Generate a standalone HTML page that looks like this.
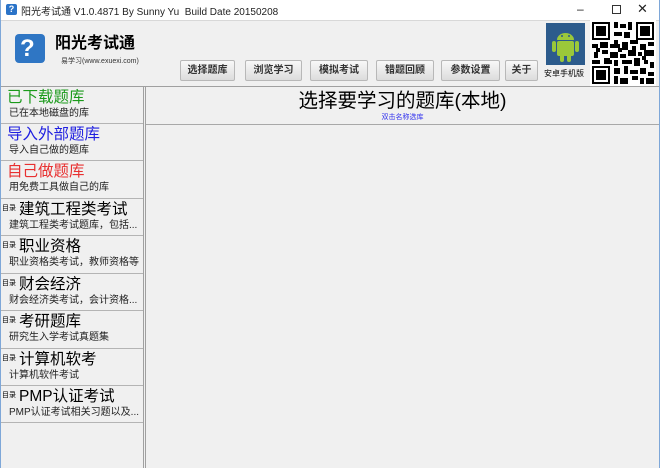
<!DOCTYPE html>
<html><head><meta charset="utf-8"><style>
*{margin:0;padding:0;box-sizing:border-box}
body{width:660px;height:468px;overflow:hidden;background:#f0f0f0;font-family:"Liberation Sans","Noto Sans CJK SC",sans-serif;position:relative;color:#000}
.abs{position:absolute}
.title{left:0;top:0;width:660px;height:20px;background:#fff;border-left:1px solid #7ea7d8;border-right:1px solid #7ea7d8}
.title span{position:absolute;left:20px;top:3px;font-size:10px;color:#222;white-space:nowrap}
.btn{position:absolute;top:60px;height:21px;border:1px solid #b8b8b8;border-radius:2px;background:linear-gradient(#f8f8f8,#dcdcdc);font-size:10px;font-weight:bold;color:#333;text-align:center;line-height:19px}
.item{position:absolute;left:1px;width:142px;border-bottom:1px solid #b4b4b4}
.item .h{position:absolute;left:6px;top:2px;font-size:15.5px;white-space:nowrap;line-height:18px}
.item .s{position:absolute;left:8px;top:21px;font-size:10px;white-space:nowrap;color:#222;line-height:12px}
.item .m{position:absolute;left:1px;top:4px;font-size:7px;font-family:"Noto Sans CJK SC",sans-serif}
.item .h2{left:18px}
</style></head><body>
<div class="abs" style="left:0;top:0;width:1px;height:468px;background:#7ea7d8"></div>
<div class="abs" style="right:0;top:0;width:1px;height:468px;background:#7ea7d8"></div>
<div class="abs title"><div class="abs" style="left:5px;top:4px;width:11px;height:11px;background:#2a73c8;border-radius:2px;color:#fff;font-size:9px;line-height:11px;text-align:center;font-weight:bold">?</div><span>阳光考试通 V1.0.4871 By Sunny Yu&nbsp; Build Date 20150208</span>
<span style="left:576px;top:2px;font-size:12px">–</span>
<div class="abs" style="left:611px;top:5px;width:9px;height:9px;border:1px solid #333"></div>
<span style="left:636px;top:1px;font-size:13px">✕</span></div>
<div class="abs" style="left:1px;top:20px;width:658px;height:1px;background:#d8d8d8"></div>
<div class="abs" style="left:15px;top:34px;width:30px;height:29px;background:#2f76c4;border-radius:4px;color:#fff;font-size:24px;font-weight:bold;line-height:29px;text-align:left;padding-left:5px">?</div>
<div class="abs" style="left:55px;top:34px;font-size:16px;font-weight:bold;white-space:nowrap;line-height:20px">阳光考试通</div>
<div class="abs" style="left:61px;top:56px;font-size:7px;white-space:nowrap;color:#333">易学习(www.exuexi.com)</div>
<div class="btn" style="left:180px;width:55px">选择题库</div>
<div class="btn" style="left:245px;width:57px">浏览学习</div>
<div class="btn" style="left:310px;width:58px">模拟考试</div>
<div class="btn" style="left:376px;width:58px">错题回顾</div>
<div class="btn" style="left:441px;width:59px">参数设置</div>
<div class="btn" style="left:505px;width:33px">关于</div>
<svg class="abs" style="left:546px;top:23px" width="39" height="42" viewBox="0 0 39 42"><rect width="39" height="42" fill="#2c5b8c"/><g fill="#9bc83a"><path d="M11 17a8.5 7 0 0 1 17 0z"/><rect x="11" y="18" width="17" height="15" rx="2"/><rect x="6" y="18" width="4" height="11" rx="2"/><rect x="29" y="18" width="4" height="11" rx="2"/><rect x="14" y="31" width="4" height="8" rx="2"/><rect x="21" y="31" width="4" height="8" rx="2"/></g><circle cx="16" cy="13" r="1" fill="#2c5b8c"/><circle cx="23" cy="13" r="1" fill="#2c5b8c"/></svg>
<div class="abs" style="left:544px;top:68px;font-size:8px;white-space:nowrap">安卓手机版</div>
<svg class="abs" style="left:590px;top:20px" width="66" height="66" viewBox="0 0 33 33"><rect width="33" height="33" fill="#fff"/><g fill="#000">
<rect x="1" y="1" width="9" height="9"/><rect x="23" y="1" width="9" height="9"/><rect x="1" y="23" width="9" height="9"/></g>
<g fill="#fff"><rect x="2" y="2" width="7" height="7"/><rect x="24" y="2" width="7" height="7"/><rect x="2" y="24" width="7" height="7"/></g>
<g fill="#000"><rect x="3" y="3" width="5" height="5"/><rect x="25" y="3" width="5" height="5"/><rect x="3" y="25" width="5" height="5"/>
<path d="M12 1h2v3h-2zM15 2h3v2h-3zM19 1h2v4h-2zM12 6h4v2h-4zM17 6h3v3h-3zM12 10h2v2h-2zM1 12h3v2H1zM5 11h4v3H5zM10 12h5v2h-5zM16 11h3v4h-3zM20 10h4v2h-4zM25 12h3v3h-3zM29 11h3v2h-3zM2 16h2v3H2zM6 15h3v2H6zM10 16h4v3h-4zM15 17h3v2h-3zM19 15h4v3h-4zM24 16h2v2h-2zM27 15h5v3h-5zM1 20h4v2H1zM7 19h3v3H7zM12 20h2v3h-2zM16 20h5v2h-5zM22 19h3v4h-3zM27 20h2v2h-2zM30 21h2v3h-2zM12 24h3v3h-3zM17 23h2v4h-2zM20 25h4v2h-4zM25 24h3v3h-3zM29 26h3v2h-3zM12 28h2v4h-2zM15 29h4v3h-4zM21 28h3v2h-3zM25 29h2v3h-2zM28 29h4v3h-4zM14 14h2v2h-2zM21 13h2v2h-2zM9 20h2v2H9zM3 14h2v2H3zM26 18h2v2h-2z"/></g></svg>
<div class="abs" style="left:1px;top:86px;width:658px;height:1px;background:#a0a0a0"></div>
<div class="abs" style="left:143px;top:87px;width:1px;height:381px;background:#a0a0a0"></div>
<div class="abs" style="left:145px;top:87px;width:1px;height:381px;background:#a0a0a0"></div>
<div class="abs" style="left:146px;top:124px;width:513px;height:1px;background:#a8a8a8"></div>
<div class="abs" style="left:146px;top:89px;width:513px;text-align:center;font-size:19.5px;line-height:24px;white-space:nowrap">选择要学习的题库(本地)</div>
<div class="abs" style="left:146px;top:112px;width:513px;text-align:center;font-size:7px;color:#3333ee">双击名称选库</div>
<div class="item" style="top:87px;height:37px"><div class="h" style="color:#1a9a1a">已下载题库</div><div class="s">已在本地磁盘的库</div></div>
<div class="item" style="top:124px;height:37px"><div class="h" style="color:#2020e0">导入外部题库</div><div class="s">导入自己做的题库</div></div>
<div class="item" style="top:161px;height:38px"><div class="h" style="color:#e83030">自己做题库</div><div class="s">用免费工具做自己的库</div></div>
<div class="item" style="top:199px;height:37px"><div class="m">目录</div><div class="h h2">建筑工程类考试</div><div class="s">建筑工程类考试题库，包括...</div></div>
<div class="item" style="top:236px;height:38px"><div class="m">目录</div><div class="h h2">职业资格</div><div class="s">职业资格类考试，教师资格等</div></div>
<div class="item" style="top:274px;height:37px"><div class="m">目录</div><div class="h h2">财会经济</div><div class="s">财会经济类考试，会计资格...</div></div>
<div class="item" style="top:311px;height:38px"><div class="m">目录</div><div class="h h2">考研题库</div><div class="s">研究生入学考试真题集</div></div>
<div class="item" style="top:349px;height:37px"><div class="m">目录</div><div class="h h2">计算机软考</div><div class="s">计算机软件考试</div></div>
<div class="item" style="top:386px;height:37px"><div class="m">目录</div><div class="h h2">PMP认证考试</div><div class="s">PMP认证考试相关习题以及...</div></div>
</body></html>
